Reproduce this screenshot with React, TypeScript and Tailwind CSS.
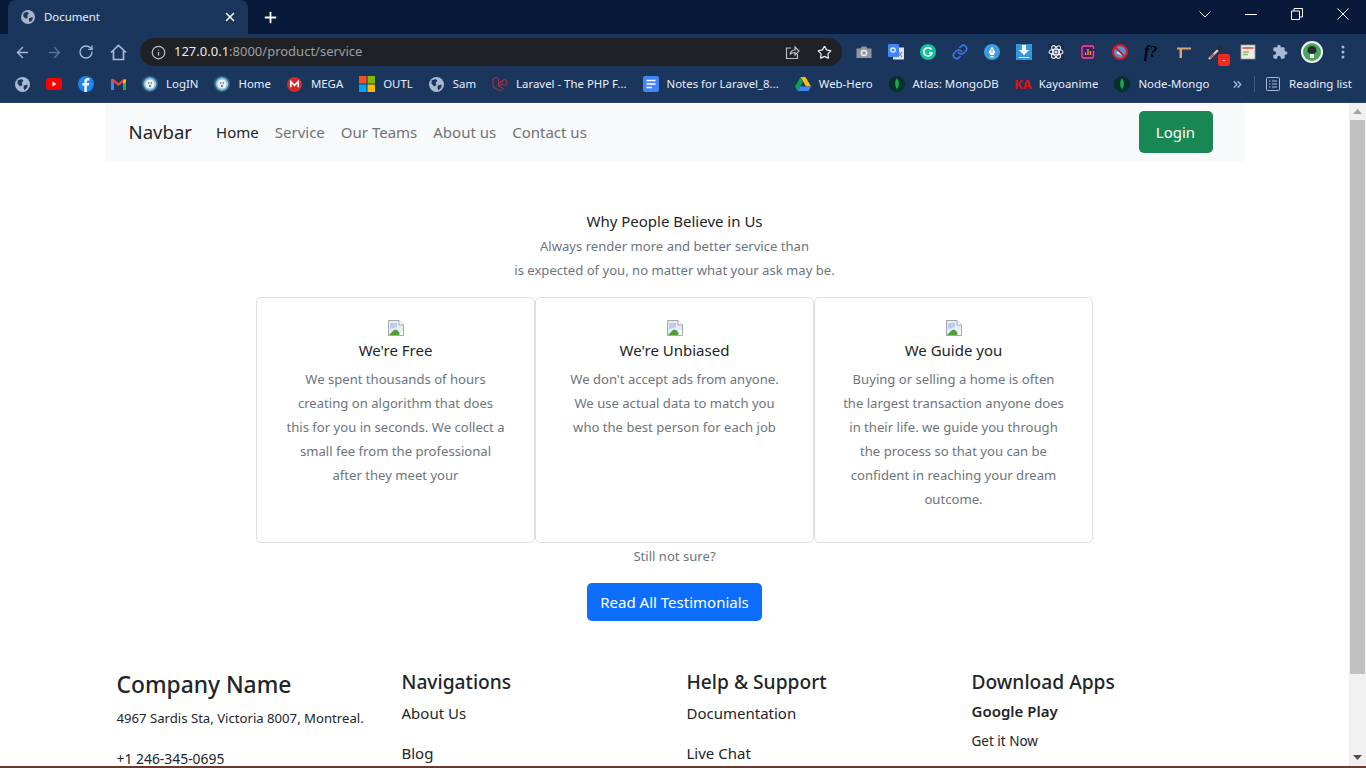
import React from 'react';
import { ArrowLeft, ArrowRight, RotateCw, Info, Star, Link, X, Plus, ChevronsRight } from 'lucide-react';

const chromeFont = { fontFamily: '"Noto Sans", "Open Sans", sans-serif' };

// Globo cinza usado nos favicons sem imagem
const GlobeDot = ({ size = 14, color = '#a9b9d3' }: { size?: number; color?: string }) => (
  <svg width={size} height={size} viewBox="0 0 16 16">
    <circle cx="8" cy="8" r="8" fill={color} />
    <path d="M3 3.5 L7 2 L9 4 L7 6.5 L8 8.5 L5.5 10 L2.5 7 Z M9.5 9 L13.5 8 L13 11.5 L10 14 L9 11.5 Z" fill="#1c365c" />
  </svg>
);

const GhostIcon = () => (
  <svg width="16" height="16" viewBox="0 0 16 16">
    <circle cx="8" cy="8" r="8" fill="#2a6a96" />
    <circle cx="8" cy="8" r="6.4" fill="#8fbccf" />
    <circle cx="8" cy="8" r="4.6" fill="#eef4f6" />
    <circle cx="6.6" cy="7" r="0.8" fill="#4a5566" />
    <circle cx="9.4" cy="7" r="0.8" fill="#4a5566" />
    <ellipse cx="8" cy="10" rx="0.8" ry="1.2" fill="#4a5566" />
  </svg>
);

const LeafIcon = () => (
  <svg width="16" height="16" viewBox="0 0 16 16">
    <circle cx="8" cy="8" r="8" fill="#06302b" />
    <path d="M8 2.5 C10.5 5 10.5 9.5 8 13.5 C5.5 9.5 5.5 5 8 2.5 Z" fill="#13aa52" />
  </svg>
);

const Bookmark = ({ icon, label, className }: { icon: React.ReactNode; label?: string; className?: string }) => (
  <div className={`flex items-center gap-2 shrink-0 ${className ?? ''}`}>
    <span className="w-4 h-4 flex items-center justify-center">{icon}</span>
    {label && <span className="text-[11.42px] leading-none text-[#e8eefa] whitespace-nowrap">{label}</span>}
  </div>
);

const BrowserChrome = () => (
  <div style={chromeFont} className="shrink-0">
    {/* Barra de abas */}
    <div className="h-[34px] bg-[#08193a] flex items-end relative">
      <div className="ml-2 w-[240px] h-[34px] bg-[#1b365d] rounded-t-lg flex items-center pl-[13px] pr-[11px]">
        <GlobeDot size={14} color="#a8b3c4" />
        <span className="ml-[9px] text-[11.4px] text-[#e8eefa] flex-1">Document</span>
        <X size={14} strokeWidth={2.5} className="text-white" />
      </div>
      <Plus size={17} strokeWidth={2.5} className="text-white ml-[14px] mb-[8px]" />
      <div className="ml-auto flex items-center gap-[34px] h-[34px] mb-[3px] pr-[17px]">
        <svg width="12" height="12" viewBox="0 0 12 12" fill="none" stroke="white"><path d="M0.5 3.5 L6 9 L11.5 3.5" /></svg>
        <svg width="12" height="12" viewBox="0 0 12 12" fill="none" stroke="white"><path d="M0 6.5 H12" /></svg>
        <svg width="12" height="12" viewBox="0 0 12 12" fill="none" stroke="white"><path d="M0.5 3 H8.5 V11.5 H0.5 Z M3 3 V0.5 H11.5 V9 H8.5" /></svg>
        <svg width="12" height="12" viewBox="0 0 12 12" fill="none" stroke="white"><path d="M0.5 0.5 L11.5 11.5 M11.5 0.5 L0.5 11.5" /></svg>
      </div>
    </div>
    {/* Barra de endereço */}
    <div className="h-[36px] bg-[#1b365d] flex items-center pl-[14px] pr-[14px]">
      <ArrowLeft size={17} strokeWidth={2} className="text-[#a9b9d3]" />
      <ArrowRight size={17} strokeWidth={2} className="text-[#5a7194] ml-[15px]" />
      <RotateCw size={16} strokeWidth={2} className="text-[#a9b9d3] ml-[15px]" />
      <svg width="17" height="17" viewBox="0 0 17 17" fill="none" stroke="#a9b9d3" strokeWidth="1.7" className="ml-[16px]"><path d="M1 8.5 L8.5 1.5 L16 8.5 M3.5 7 V15.5 H13.5 V7" /></svg>
      <div className="ml-[13px] w-[702px] h-[28px] bg-[#202124] rounded-full flex items-center pl-[11px] pr-[10px]">
        <Info size={15} className="text-[#bdc1c6]" />
        <span className="ml-[8px] text-[13px] text-[#e8eaed]">127.0.0.1<span className="text-[#9aa0a6]">:8000/product/service</span></span>
        <svg width="15" height="15" viewBox="0 0 15 15" fill="none" stroke="#bdc1c6" strokeWidth="1.2" className="ml-auto"><path d="M12.5 9 V13.5 H1.5 V3 H6 M5 9.5 C5.5 6.5 8 5 10 5 V2 L14 6 L10 10 V7.5 C8 7.5 6 8 5 9.5 Z" /></svg>
        <Star size={15} className="text-[#e8eaed] ml-[17px]" />
      </div>
      <div className="flex items-center ml-[14px] gap-[16px]">
        <svg width="16" height="16" viewBox="0 0 16 16"><path d="M0.5 4.5 H4.5 L6 2.5 H10 L11.5 4.5 H15.5 V14 H0.5 Z" fill="#8f969e" /><circle cx="8" cy="9" r="3.3" fill="#e8eaed" /><circle cx="8" cy="9" r="1.8" fill="#8f969e" /></svg>
        <svg width="16" height="16" viewBox="0 0 16 16"><rect x="5" y="3.5" width="11" height="12" fill="#dfe3e8" /><path d="M11 8 L14 13 M14 8 L10 13" stroke="#7a8088" strokeWidth="1" /><rect y="0" width="11" height="13" rx="1" fill="#4285f4" /><circle cx="5" cy="6" r="2.2" fill="none" stroke="white" strokeWidth="1.2" /></svg>
        <svg width="16" height="16" viewBox="0 0 16 16"><circle cx="8" cy="8" r="8" fill="#15c39a" /><path d="M11.5 5.5 A4.2 4.2 0 1 0 12 9 H9" fill="none" stroke="white" strokeWidth="1.6" /></svg>
        <Link size={16} strokeWidth={2.4} className="text-[#3d78e0]" />
        <svg width="16" height="16" viewBox="0 0 16 16"><circle cx="8" cy="8" r="8" fill="#3d9be0" /><path d="M8 2.5 L11.2 8 L9.7 11 H6.3 L4.8 8 Z" fill="white" /><path d="M6.3 12 H9.7 V13.5 H6.3 Z" fill="white" /><path d="M8 5 V8.5" stroke="#3d9be0" /></svg>
        <svg width="16" height="16" viewBox="0 0 16 16"><rect width="16" height="16" fill="#3498db" /><path d="M6 1 H10 V6 H13 L8 11 L3 6 H6 Z M3 13 H13 V14 H3 Z" fill="white" /></svg>
        <svg width="16" height="16" viewBox="0 0 16 16" fill="none" stroke="#f2f4f7" strokeWidth="1.1"><rect width="16" height="16" fill="#1a2d4c" stroke="none" /><ellipse cx="8" cy="8" rx="7" ry="2.8" /><ellipse cx="8" cy="8" rx="7" ry="2.8" transform="rotate(60 8 8)" /><ellipse cx="8" cy="8" rx="7" ry="2.8" transform="rotate(120 8 8)" /><circle cx="8" cy="8" r="1" fill="#f2f4f7" /></svg>
        <svg width="16" height="16" viewBox="0 0 16 16"><rect width="16" height="16" rx="3" fill="#43205c" /><path d="M13.5 5 V3.5 Q13.5 2 12 2 H4 Q2 2 2 4 V12 Q2 14 4 14 H12 Q13.5 14 13.5 12 V7" fill="none" stroke="#e0559b" strokeWidth="1.3" /><path d="M5.5 11 V8.5 M8 11 V5 M10.5 11 V7" stroke="#f09a3e" strokeWidth="1.4" /></svg>
        <svg width="16" height="16" viewBox="0 0 16 16"><circle cx="8" cy="8" r="7" fill="#4d93cf" stroke="#e3161e" strokeWidth="2" /><path d="M5 8 L11 11" stroke="#e8eef5" strokeWidth="2.5" /><path d="M3 3 L13 13" stroke="#e3161e" strokeWidth="2" /></svg>
        <span className="w-4 text-[16px] leading-none italic font-bold text-black" style={{ fontFamily: '"Liberation Serif", serif' }}>f?</span>
        <svg width="16" height="16" viewBox="0 0 16 16"><path d="M1 3.5 H15 V5.5 H6 V14 H3.5 V5.5 H1 Z" fill="#dda468" /></svg>
        <div className="relative w-4 h-4">
          <svg width="16" height="16" viewBox="0 0 16 16"><path d="M1 15 L10 6" stroke="#e6c9c6" strokeWidth="2.4" /><path d="M2 14 L6 10" stroke="#c9433e" strokeWidth="1.6" /><path d="M10 6 L13 3" stroke="#2b2b2b" strokeWidth="4.5" /></svg>
          <span className="absolute left-[10px] top-[10px] w-3 h-3 bg-[#f02b1d] rounded-[2px] text-white text-[8px] leading-[11px] text-center">-</span>
        </div>
        <svg width="16" height="16" viewBox="0 0 16 16"><rect x="1" y="1" width="14" height="14" fill="#f1ece3" stroke="#9a9a9a" strokeWidth="0.8" /><rect x="2.5" y="3" width="11" height="2" fill="#e8685c" /><path d="M3 8 H9 M3 10.5 H8" stroke="#8cbf5c" strokeWidth="1.3" /></svg>
        <svg width="16" height="16" viewBox="0 0 24 24" fill="#a9b9d3"><path d="M20.5 11H19V7c0-1.1-.9-2-2-2h-4V3.5C13 2.12 11.88 1 10.5 1S8 2.12 8 3.5V5H4c-1.1 0-1.99.9-1.99 2v3.8H3.5c1.49 0 2.7 1.21 2.7 2.7s-1.21 2.7-2.7 2.7H2V20c0 1.1.9 2 2 2h3.8v-1.5c0-1.49 1.21-2.7 2.7-2.7 1.49 0 2.7 1.21 2.7 2.7V22H17c1.1 0 2-.9 2-2v-4h1.5c1.38 0 2.5-1.12 2.5-2.5S21.88 11 20.5 11z" /></svg>
        <svg width="22" height="22" viewBox="0 0 22 22" className="-ml-[3px]"><circle cx="11" cy="11" r="11" fill="#f3f6f3" /><circle cx="11" cy="11" r="9" fill="#4aa55f" /><path d="M6.5 9.5 A4.5 4.5 0 0 1 15.5 9.5 C15.5 12 13.5 13 11 13 C8.5 13 6.5 12 6.5 9.5 Z" fill="#22302a" /><rect x="9" y="13" width="4" height="4" fill="#eef2e8" /></svg>
        <svg width="4" height="14" viewBox="0 0 4 14" className="ml-[2px]" fill="#a9b9d3"><circle cx="2" cy="2" r="1.5" /><circle cx="2" cy="7" r="1.5" /><circle cx="2" cy="12" r="1.5" /></svg>
      </div>
    </div>
    {/* Barra de favoritos */}
    <div className="h-[33px] bg-[#1b365d] flex items-center pl-[14px] pr-[14px] pb-[4px] border-b border-[#2a4468]">
      <Bookmark icon={<GlobeDot size={15} />} />
      <Bookmark className="ml-4" icon={<svg width="16" height="12" viewBox="0 0 16 12"><rect width="16" height="12" rx="3" fill="#f00" /><path d="M6.5 3.5 L10.5 6 L6.5 8.5 Z" fill="white" /></svg>} />
      <Bookmark className="ml-4" icon={<svg width="16" height="16" viewBox="0 0 16 16"><circle cx="8" cy="8" r="8" fill="#1a86f0" /><path d="M8.8 16 V9.5 H11 L11.3 7 H8.8 V5.5 C8.8 4.7 9.2 4.4 10 4.4 H11.4 V2.2 C9 1.8 6.4 2.2 6.4 5.2 V7 H4.4 V9.5 H6.4 V16 Z" fill="white" /></svg>} />
      <Bookmark className="ml-4" icon={<svg width="15" height="12" viewBox="0 0 15 12"><path d="M0 12 V1.5 L3 1 V12 Z" fill="#4285f4" /><path d="M12 12 V1 L15 1.5 V12 Z" fill="#34a853" /><path d="M0 2 L2 0.5 L7.5 5 L13 0.5 L15 2 L7.5 8 Z" fill="#ea4335" /><path d="M12 2.5 L15 1 V4 L12 6 Z" fill="#fbbc04" /></svg>} />
      <Bookmark className="ml-4" icon={<GhostIcon />} label="LogIN" />
      <Bookmark className="ml-4" icon={<GhostIcon />} label="Home" />
      <Bookmark className="ml-4" icon={<svg width="15" height="15" viewBox="0 0 16 16"><circle cx="8" cy="8" r="8" fill="#d9272e" /><path d="M4 11 V5 L8 9 L12 5 V11" fill="none" stroke="white" strokeWidth="1.7" /></svg>} label="MEGA" />
      <Bookmark className="ml-4" icon={<svg width="16" height="16" viewBox="0 0 16 16"><rect width="7.5" height="7.5" fill="#f25022" /><rect x="8.5" width="7.5" height="7.5" fill="#7fba00" /><rect y="8.5" width="7.5" height="7.5" fill="#00a4ef" /><rect x="8.5" y="8.5" width="7.5" height="7.5" fill="#ffb900" /></svg>} label="OUTL" />
      <Bookmark className="ml-4" icon={<GlobeDot size={15} />} label="Sam" />
      <Bookmark className="ml-4" icon={<svg width="16" height="16" viewBox="0 0 16 16" fill="none" stroke="#b5303a" strokeWidth="1"><path d="M1 3 L4 1.5 L6.5 3 V10 L11.5 12.5 L8.5 15 L1 11 Z M6.5 7 L10 5 V8 L6.5 10 M10 5 L12.5 3.5 L15 5 V8 L12.5 9.5 L10 8" /></svg>} label="Laravel - The PHP F..." />
      <Bookmark className="ml-4" icon={<svg width="16" height="16" viewBox="0 0 16 16"><rect width="16" height="16" rx="2" fill="#4285f4" /><path d="M3.5 4.5 H12.5 M3.5 8 H12.5 M3.5 11.5 H9" stroke="white" strokeWidth="1.5" /></svg>} label="Notes for Laravel_8..." />
      <Bookmark className="ml-4" icon={<svg width="16" height="14" viewBox="0 0 16 14"><path d="M5.5 0 H10.5 L16 9.5 H11 Z" fill="#fbbc04" /><path d="M5.5 0 L0 9.5 L2.5 14 L8 4.5 Z" fill="#0f9d58" /><path d="M2.5 14 H13.5 L16 9.5 H5.2 Z" fill="#4285f4" /></svg>} label="Web-Hero" />
      <Bookmark className="ml-4" icon={<LeafIcon />} label="Atlas: MongoDB" />
      <Bookmark className="ml-4" icon={<span className="text-[13px] font-bold text-[#e01010] leading-none">KA</span>} label="Kayoanime" />
      <Bookmark className="ml-4" icon={<LeafIcon />} label="Node-Mongo" />
      <div className="ml-auto flex items-center">
        <ChevronsRight size={13} strokeWidth={2.5} className="text-[#a9b9d3]" />
        <div className="w-px h-4 bg-[#45597a] ml-[10px] mr-[11px]" />
        <svg width="14" height="14" viewBox="0 0 14 14" fill="none" stroke="#a9b9d3"><rect x="0.5" y="0.5" width="13" height="13" rx="1" /><path d="M3 4 H4.5 M6 4 H11 M3 7 H4.5 M6 7 H11 M3 10 H4.5 M6 10 H11" /></svg>
        <span className="text-[11.5px] text-[#e8eefa] ml-[9px] whitespace-nowrap">Reading list</span>
      </div>
    </div>
  </div>
);

// Ícone de imagem quebrada do navegador
const BrokenImage = () => (
  <svg width="16" height="16" viewBox="0 0 16 16" className="mx-auto">
    <path d="M0.5 0.5 H11 L15.5 5 V15.5 H0.5 Z" fill="#e6ecf5" stroke="#a8a8a8" />
    <path d="M11 0.5 V5 H15.5" fill="#fff" stroke="#a8a8a8" />
    <path d="M2 3 H9 V7 L2 9 Z" fill="#b8cdf0" />
    <path d="M1 15 L6 10 C9 9 11 11 12 15 Z" fill="#4f9e38" />
    <path d="M11 15 L15 10 V15 Z" fill="#fff" />
  </svg>
);

const cards = [
  { title: "We're Free", lines: ['We spent thousands of hours', 'creating on algorithm that does', 'this for you in seconds. We collect a', 'small fee from the professional', 'after they meet your'] },
  { title: "We're Unbiased", lines: ["We don't accept ads from anyone.", 'We use actual data to match you', 'who the best person for each job'] },
  { title: 'We Guide you', lines: ['Buying or selling a home is often', 'the largest transaction anyone does', 'in their life. we guide you through', 'the process so that you can be', 'confident in reaching your dream', 'outcome.'] },
];

const FeatureCard = ({ title, lines }: { title: string; lines: string[] }) => (
  <div className="w-[279px] h-[246px] border border-[#dfdfdf] rounded-[5px] pt-[22px] text-center shrink-0">
    <BrokenImage />
    <h5 className="text-[15px] leading-[24px] text-[#212529] mt-[2px]">{title}</h5>
    <div className="mt-[5px] text-[13.1px] leading-[24px] text-[#6c757d]">
      {lines.map((line) => <p key={line}>{line}</p>)}
    </div>
  </div>
);

const FooterColumn = ({ title, links }: { title: string; links: string[] }) => (
  <div className="w-[285px] px-3 pt-[8px]">
    <h4 className="text-[19.2px] leading-[24px] font-medium text-[#212529]">{title}</h4>
    <ul className="mt-[7px] text-[15px] leading-[24px] text-[#212529] space-y-4">
      {links.map((link) => <li key={link}>{link}</li>)}
    </ul>
  </div>
);

export default function App() {
  return (
    <div className="h-screen w-full overflow-hidden flex flex-col bg-white">
      <BrowserChrome />
      <div className="flex-1 min-h-0 flex overflow-hidden border-b-2 border-[#6b3a2e]" style={{ fontFamily: '"Noto Sans", "Open Sans", sans-serif' }}>
        <main className="flex-1 min-w-0 overflow-hidden flex flex-col items-center">
          <nav className="w-[1140px] h-[58px] shrink-0 bg-[#f8f9fa] flex items-center pl-6 pr-8">
            <span className="text-[18.6px] text-[#212529]">Navbar</span>
            <div className="flex items-center ml-6 gap-4 text-[15px] text-[#6f7377]">
              <span className="text-[#212529]">Home</span>
              <span>Service</span>
              <span>Our Teams</span>
              <span>About us</span>
              <span>Contact us</span>
            </div>
            <button className="ml-auto w-[74px] h-[42px] bg-[#198754] rounded-[5px] text-white text-[15px]">Login</button>
          </nav>
          <section className="mt-[48px] text-center w-full shrink-0">
            <h5 className="text-[15px] leading-[24px] text-[#212529]">Why People Believe in Us</h5>
            <p className="mt-[1px] text-[13.1px] leading-[24px] text-[#6c757d]">Always render more and better service than</p>
            <p className="text-[13.1px] leading-[24px] text-[#6c757d]">is expected of you, no matter what your ask may be.</p>
          </section>
          <div className="flex mt-[15px] shrink-0">
            {cards.map((card) => <FeatureCard key={card.title} {...card} />)}
          </div>
          <p className="text-[13.1px] leading-[24px] text-[#6c757d] mt-[1px] shrink-0">Still not sure?</p>
          <button className="mt-[15px] w-[175px] h-[38px] bg-[#0d6efd] rounded-[5px] text-white text-[15px] shrink-0">Read All Testimonials</button>
          <footer className="w-[1140px] flex mt-[41px] shrink-0">
            <div className="w-[285px] px-3 pt-[7px]">
              <h3 className="text-[22.8px] leading-[32px] font-medium text-[#212529]">Company Name</h3>
              <p className="mt-[7px] text-[13.15px] leading-[21px] text-[#212529] whitespace-nowrap">4967 Sardis Sta, Victoria 8007, Montreal.</p>
              <p className="mt-[23px] text-[13.9px] leading-[14px] text-[#212529]">+1 246-345-0695</p>
            </div>
            <FooterColumn title="Navigations" links={['About Us', 'Blog']} />
            <FooterColumn title="Help & Support" links={['Documentation', 'Live Chat']} />
            <div className="w-[285px] px-3 pt-[8px]">
              <h4 className="text-[19.2px] leading-[24px] font-medium text-[#212529]">Download Apps</h4>
              <h6 className="mt-[5px] text-[15px] leading-[24px] font-semibold text-[#212529]">Google Play</h6>
              <p className="mt-[8px] text-[13.5px] leading-[21px] text-[#212529]">Get it Now</p>
            </div>
          </footer>
        </main>
        {/* Barra de rolagem */}
        <div className="w-[17px] shrink-0 bg-[#f1f1f1] flex flex-col items-center">
          <svg width="9" height="5" viewBox="0 0 9 5" className="mt-[6px]"><path d="M4.5 0 L9 5 H0 Z" fill="#a3a3a3" /></svg>
          <div className="w-[15px] h-[554px] bg-[#c1c1c1] mt-[6px]" />
          <svg width="9" height="5" viewBox="0 0 9 5" className="mt-auto mb-[6px]"><path d="M0 0 H9 L4.5 5 Z" fill="#505050" /></svg>
        </div>
      </div>
    </div>
  );
}
